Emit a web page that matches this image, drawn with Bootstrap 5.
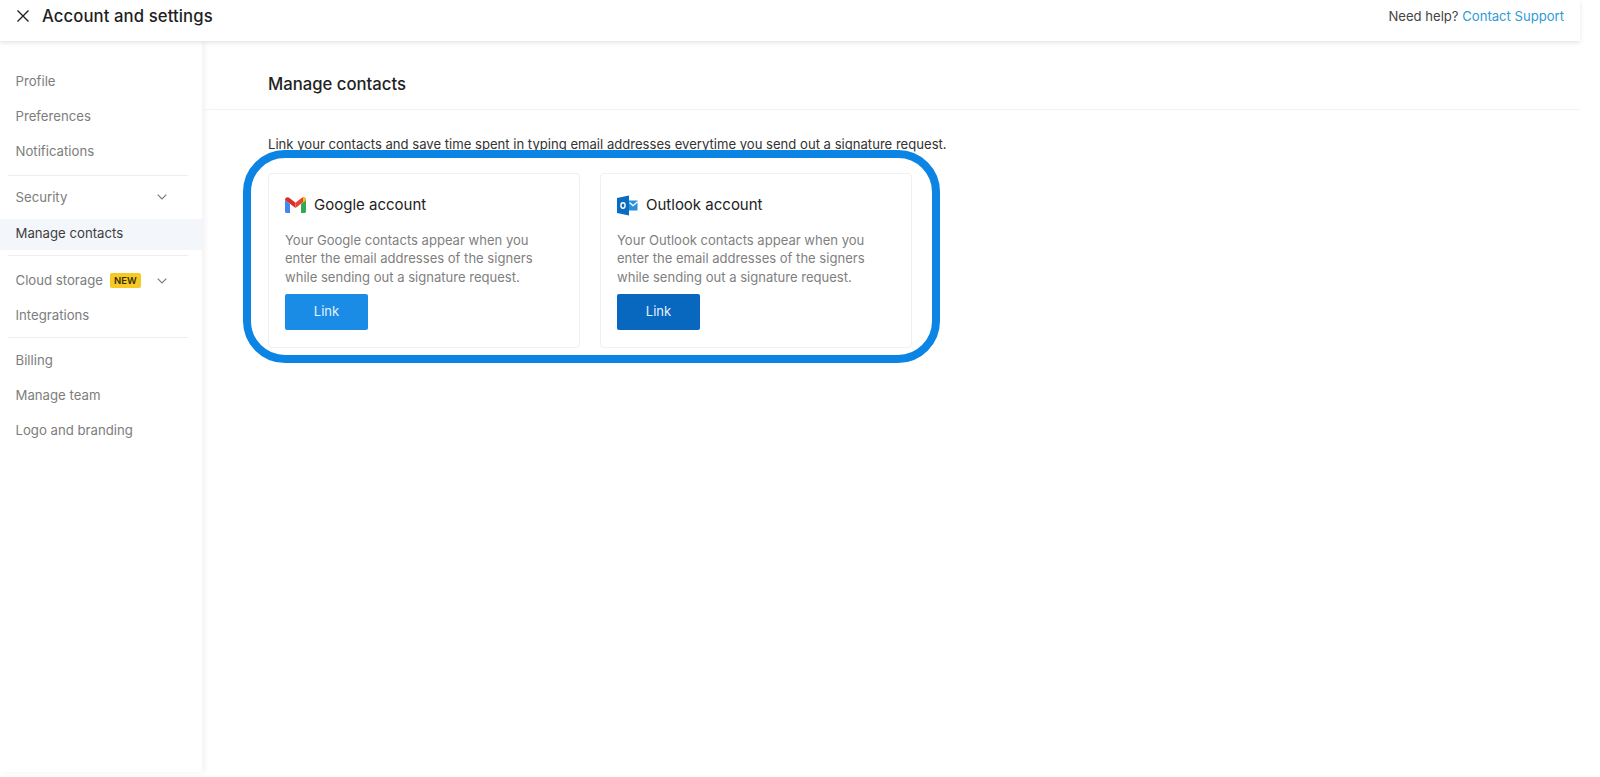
<!DOCTYPE html>
<html lang="en">
<head>
<meta charset="utf-8">
<title>Account and settings</title>
<link href="https://cdn.jsdelivr.net/npm/bootstrap@5.3.0/dist/css/bootstrap.min.css" rel="stylesheet">
<style>
html,body{height:100%;background:#fff;overflow:hidden}
body{font-family:Inter,"Liberation Sans",sans-serif;color:#222;font-size:13.2px}
.shell{width:1580px;height:772px;display:flex;flex-direction:column}
.topbar{height:41px;padding:0 16px 9px;box-shadow:0 2px 4px rgba(0,0,0,.1);position:relative;z-index:2;background:#fff;flex:none}
.top-title{font-size:16.7px;font-weight:500;color:#1f1f1f;margin-left:12px;line-height:1;letter-spacing:.1px}
.help{font-size:13.1px;color:#444;position:relative;top:1px}
.help a{color:#2f9bd6;text-decoration:none}
.body-row{flex:1;min-height:0}
.side{width:202px;flex:none;box-shadow:3px 0 6px rgba(0,0,0,.05);padding-top:24px;background:#fff}
.side-item{height:34.7px;padding:0 15.500px;display:flex;align-items:center;color:#7d7d7d;font-size:13.2px;text-decoration:none}
.side-item.current{background:#f3f6fb;color:#3e3e3e;height:31px;margin-top:4px}
.side-item.taller{height:35.7px}
.side-rule{height:1px;background:#eeeeee;margin:5.5px 14px 5.5px 8px}
.side-rule.before-security{margin-bottom:4.5px}
.side-rule.after-current{margin-bottom:6.5px}
.side-rule.before-billing{margin-top:3.5px}
.chev{margin-left:auto;margin-right:20px}
.new-tag{background:#f7c925;color:#3a3000;font-size:9.5px;font-weight:600;line-height:15px;padding:0 4px;border-radius:2px;margin-left:7px}
.main-pane{flex:1;min-width:0}
.pane-head{height:69px;padding:19px 0 0 66px;display:flex;align-items:center;font-size:16.7px;font-weight:500;color:#222;border-bottom:1px solid #f3f3f3}
.pane-intro{margin:25px 0 0 66px;font-size:13.1px;line-height:18px;color:#333}
.link-row{position:relative;margin:20px 0 0 66px;width:644px;gap:20px}
.ring{position:absolute;left:-25px;top:-23px;width:697px;height:213px;border:8px solid #0b84e3;border-radius:42px;pointer-events:none}
.acct{width:312px;height:175px;border:1px solid #f0f0f0;border-radius:4px;padding:0 16px;background:#fff}
.acct-head{height:20px;margin-top:21px;font-size:15px;color:#222;font-weight:400}
.acct-head svg{margin-right:8px;flex:none}
.acct-text{font-size:13.05px;line-height:18.4px;color:#7f7f7f;margin:16px 0 8px;white-space:nowrap}
.btn.link-a,.btn.link-b{width:83px;height:36px;padding:0;font-size:13px;color:#e6f3fd;border-radius:2px;border:0;display:flex;align-items:center;justify-content:center}
.btn.link-a{background:#1a8ce6}
.btn.link-b{background:#0867bf}
</style>
</head>
<body>
<div class="shell">
  <header class="topbar d-flex align-items-center">
    <svg width="14" height="14" viewBox="0 0 14 14" fill="none" stroke="#222" stroke-width="1.4"><path d="M1.5 1.5l11 11M12.5 1.5l-11 11"/></svg>
    <span class="top-title">Account and settings</span>
    <span class="help ms-auto">Need help? <a href="#">Contact Support</a></span>
  </header>
  <div class="body-row d-flex">
    <nav class="side">
      <a class="side-item" href="#">Profile</a>
      <a class="side-item" href="#">Preferences</a>
      <a class="side-item" href="#">Notifications</a>
      <div class="side-rule before-security"></div>
      <a class="side-item" href="#">Security
        <svg class="chev" width="10" height="6" viewBox="0 0 10 6" fill="none" stroke="#777" stroke-width="1.1"><path d="M.7.7L5 5l4.3-4.3"/></svg></a>
      <a class="side-item current" href="#">Manage contacts</a>
      <div class="side-rule after-current"></div>
      <a class="side-item taller" href="#">Cloud storage<span class="new-tag">NEW</span>
        <svg class="chev" width="10" height="6" viewBox="0 0 10 6" fill="none" stroke="#777" stroke-width="1.1"><path d="M.7.7L5 5l4.3-4.3"/></svg></a>
      <a class="side-item" href="#">Integrations</a>
      <div class="side-rule before-billing"></div>
      <a class="side-item taller" href="#">Billing</a>
      <a class="side-item" href="#">Manage team</a>
      <a class="side-item" href="#">Logo and branding</a>
    </nav>
    <main class="main-pane">
      <div class="pane-head">Manage contacts</div>
      <p class="pane-intro">Link your contacts and save time spent in typing email addresses everytime you send out a signature request.</p>
      <div class="link-row d-flex">
        <div class="acct">
          <div class="acct-head d-flex align-items-center">
            <svg width="21" height="16" viewBox="0 0 21 16"><path d="M0 3v11.500c0 .8.700 1.500 1.500 1.500H5V7z" fill="#4285f4"/><path d="M16 7v9h3.500c.8 0 1.500-.7 1.500-1.500V3z" fill="#34a853"/><path d="M0 3c0-2.500 2.800-3.500 4.500-2L10.500 5.800v5.200L0 3z" fill="#d93025"/><path d="M10.500 5.800L16.500 1C18.200-.500 21 .500 21 3L10.500 11z" fill="#ea4335"/><path d="M18 .300C19.700 0 21 1.200 21 3l-3 2.500z" fill="#fbbc04"/></svg>
            Google account
          </div>
          <p class="acct-text">Your Google contacts appear when you<br>enter the email addresses of the signers<br>while sending out a signature request.</p>
          <a class="btn link-a" href="#">Link</a>
        </div>
        <div class="acct">
          <div class="acct-head d-flex align-items-center">
            <svg width="21" height="21" viewBox="0 0 21 21"><path d="M12 .500L0 3v15l12 2.500z" fill="#0a6cc0"/><path d="M12 5.500h8.500v10H12z" fill="#2a8fdc"/><path d="M12.500 7.500l3.500 3.200 4.500-4" fill="none" stroke="#fff" stroke-width="1.300"/><ellipse cx="6" cy="10.500" rx="2.100" ry="2.700" fill="none" stroke="#fff" stroke-width="1.400"/></svg>
            Outlook account
          </div>
          <p class="acct-text">Your Outlook contacts appear when you<br>enter the email addresses of the signers<br>while sending out a signature request.</p>
          <a class="btn link-b" href="#">Link</a>
        </div>
        <div class="ring"></div>
      </div>
    </main>
  </div>
</div>
<script src="https://cdn.jsdelivr.net/npm/bootstrap@5.3.0/dist/js/bootstrap.bundle.min.js"></script>
</body>
</html>
